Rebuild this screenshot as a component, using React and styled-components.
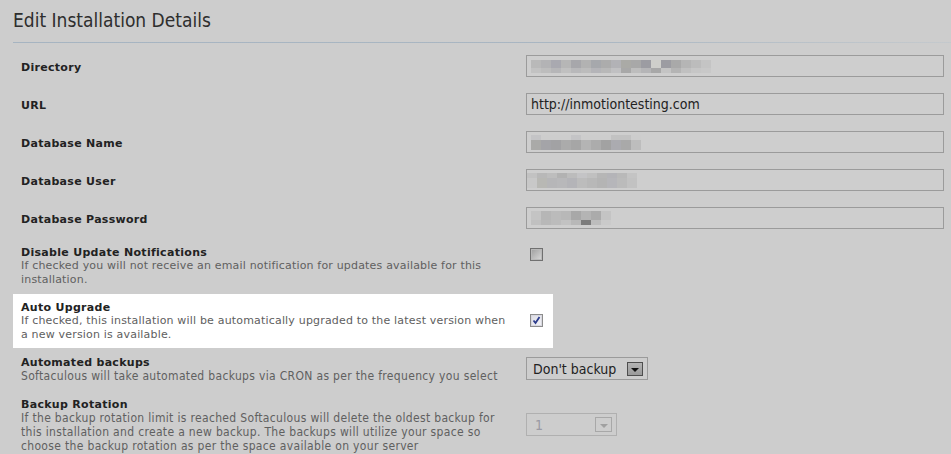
import React from "react";
import styled, { createGlobalStyle } from "styled-components";

const Global = createGlobalStyle`
  html, body { margin: 0; padding: 0; background: #cdcdcd; }
  body { font-family: "DejaVu Sans", Verdana, sans-serif; overflow: hidden; }
`;

const Page = styled.div`
  width: 951px;
  height: 454px;
  background: #cdcdcd;
  padding-left: 13px;
  box-sizing: border-box;
`;

const Title = styled.h1`
  margin: 9px 0 0;
  height: 22px;
  line-height: 22px;
  font-family: "DejaVu Sans Condensed", "DejaVu Sans", sans-serif;
  font-weight: normal;
  font-size: 19px;
  color: #2e2e2e;
`;

const Rule = styled.div`
  margin-top: 11px;
  height: 1px;
  background: linear-gradient(to right, #a6b4c1 0%, #a9b6c2 60%, #c4c9cd 100%);
`;

const Form = styled.div`
  margin-top: 4px;
  display: flex;
  flex-direction: column;
`;

const Row = styled.div`
  display: grid;
  grid-template-columns: 505px 418px;
  align-items: ${(p) => p.$align || "center"};
  box-sizing: border-box;
  width: ${(p) => (p.$highlight ? "540px" : "auto")};
  background: ${(p) => (p.$highlight ? "#ffffff" : "transparent")};
  padding: ${(p) => p.$pad || "0"} 0 ${(p) => p.$padBottom || "0"} 8px;
  margin-top: ${(p) => p.$mt || "0"};
  height: ${(p) => p.$h || "auto"};
`;

const Label = styled.div`
  font-weight: bold;
  font-size: 11px;
  line-height: 14px;
  letter-spacing: 0.3px;
  color: #222;
  padding-top: 2px;
  margin-bottom: -1px;
`;

const TextCol = styled.div`
  display: flex;
  flex-direction: column;
`;

const Desc = styled.div`
  font-family: ${(p) =>
    p.$narrow ? `"DejaVu Sans Condensed", "DejaVu Sans", sans-serif` : `"DejaVu Sans", sans-serif`};
  font-size: ${(p) => (p.$narrow ? "12px" : "11px")};
  letter-spacing: ${(p) => (p.$narrow ? "0.33px" : "0.18px")};
  line-height: 14px;
  color: #606060;
  white-space: nowrap;
`;

const Input = styled.div`
  height: 22px;
  box-sizing: border-box;
  border: 1px solid #9b9b9b;
  background: #cecece;
  padding: 0 4px;
  display: flex;
  align-items: center;
  font-family: "DejaVu Sans Condensed", "DejaVu Sans", sans-serif;
  font-size: 14px;
  color: #222;
`;

const Mosaic = styled.div`
  display: grid;
  grid-template-columns: repeat(${(p) => p.$cols}, 10px);
  grid-auto-rows: ${(p) => p.$rows};
  margin-left: ${(p) => p.$ml || "0"};
`;

const Cell = styled.span`
  display: block;
  background: ${(p) => p.$c};
`;

const Box = styled.span`
  display: block;
  width: 13px;
  height: 13px;
  box-sizing: border-box;
  margin-left: 4px;
  margin-top: ${(p) => p.$mt || "0"};
  border: 1px solid ${(p) => (p.$checked ? "#8c8c8c" : "#707070")};
  background: ${(p) =>
    p.$checked
      ? "linear-gradient(135deg, #dcdce4 0%, #f4f4f8 100%)"
      : "linear-gradient(135deg, #9e9e9e 0%, #dadada 100%)"};
  box-shadow: inset 0 0 0 1px ${(p) => (p.$checked ? "#d8d8e0" : "#b9b9b9")};
  position: relative;
`;

const Check = styled.svg`
  position: absolute;
  left: 1px;
  top: 1px;
`;

const Select = styled.div`
  width: ${(p) => p.$w};
  height: 23px;
  box-sizing: border-box;
  border: 1px solid ${(p) => (p.$disabled ? "#b0b0b0" : "#9b9b9b")};
  display: flex;
  align-items: center;
  justify-content: space-between;
  padding: 0 4px 0 ${(p) => (p.$disabled ? "8px" : "6px")};
  font-family: "DejaVu Sans Condensed", "DejaVu Sans", sans-serif;
  font-size: 14px;
  color: ${(p) => (p.$disabled ? "#9a9aa4" : "#222")};
`;

const Arrow = styled.span`
  width: ${(p) => (p.$disabled ? "17px" : "16px")};
  height: ${(p) => (p.$disabled ? "15px" : "14px")};
  box-sizing: border-box;
  border: 1px solid ${(p) => (p.$disabled ? "#a8a8a8" : "#4e4e4e")};
  background: ${(p) =>
    p.$disabled ? "#cdcdcd" : "linear-gradient(#b4b4b4, #9a9a9a)"};
  display: flex;
  align-items: center;
  justify-content: center;
  &::after {
    content: "";
    display: block;
    margin-top: 2px;
    border-left: 4px solid transparent;
    border-right: 4px solid transparent;
    border-top: 4px solid ${(p) => (p.$disabled ? "#a0a0a0" : "#111")};
  }
`;

const Control = styled.div`
  display: flex;
`;

const mosaics = {
  dir: {
    cols: 18,
    rows: "8px 5px",
    ml: "0",
    cells: [
      "#b9b9b9","#b3b3b5","#a9a9b0","#b6b6b6","#a7a7ab","#b2b2b2","#a6a8ac","#acacac","#b2b2b6","#aaaaa6","#a8a8a8","#9c9ca2","#cfcfcb","#9c9ca2","#a9a9a9","#b5b5b5","#bcbcbc","#c4c4c4",
      "#c2c2c2","#bdbdbd","#b6b6b8","#c0c0c0","#b8b8ba","#bcbcbc","#b4b4b8","#b8b8b8","#c0c0c2","#a8a8a8","#bdbdbd","#b5b5b7","#a8a8a8","#c4c4c4","#b4b4b4","#c0c0c0","#c6c6c6","#c8c8c8",
    ],
  },
  name: {
    cols: 11,
    rows: "5px 10px",
    ml: "0",
    cells: [
      "#c4c4c6","#cdcdcd","#cdcdcd","#cdcdcd","#c4c4c6","#cdcdcd","#cdcdcd","#cdcdcd","#c2c2c2","#c2c2c2","#cdcdcd",
      "#aaaaa8","#a4a4a8","#a2a2a4","#ababab","#a6a6a6","#b4b4b4","#acacac","#a2a2a2","#ababb0","#a9a9a9","#bdbdbd",
    ],
  },
  user: {
    cols: 11,
    rows: "5px 10px",
    ml: "-4px",
    cells: [
      "#c2c2c2","#b8b8b8","#bdbdbd","#b2b2b2","#bcbcbc","#c4c4c6","#c0c0c0","#b6b6b6","#b4b4b8","#b9b9b9","#c4c4c4",
      "#c8c8c8","#b8b8b4","#b6b6b8","#b8b8ba","#b4b4b8","#bcbcbc","#b8b8b8","#b4b4b4","#b6b6ba","#bbbbbb","#c2c2c2",
    ],
  },
  pass: {
    cols: 8,
    rows: "9px 5px",
    ml: "0",
    cells: [
      "#c4c4c4","#b6b6b6","#bbbbbb","#b8b8b8","#a8a8a8","#b4b4b4","#ababab","#c4c4c4",
      "#c0c0c0","#b8b8b8","#bcbcbc","#c2c2c2","#b8b8b8","#7c7c7c","#bdbdbd","#cacaca",
    ],
  },
};

function Blur({ name }) {
  const m = mosaics[name];
  return (
    <Mosaic $cols={m.cols} $rows={m.rows} $ml={m.ml}>
      {m.cells.map((c, i) => (
        <Cell key={i} $c={c} />
      ))}
    </Mosaic>
  );
}

function Checkbox({ checked, mt }) {
  return (
    <Box $checked={checked} $mt={mt}>
      {checked && (
        <Check width="9" height="9" viewBox="0 0 9 9">
          <path d="M1.5 4.5 L3.5 7 L7.5 1" fill="none" stroke="#2c3c8c" strokeWidth="1.8" />
        </Check>
      )}
    </Box>
  );
}

export default function App() {
  return (
    <>
      <Global />
      <Page>
        <Title>Edit Installation Details</Title>
        <Rule />
        <Form>
          <Row $h="38px">
            <Label>Directory</Label>
            <Input>
              <Blur name="dir" />
            </Input>
          </Row>
          <Row $h="38px">
            <Label>URL</Label>
            <Input>http://inmotiontesting.com</Input>
          </Row>
          <Row $h="38px">
            <Label>Database Name</Label>
            <Input>
              <Blur name="name" />
            </Input>
          </Row>
          <Row $h="38px">
            <Label>Database User</Label>
            <Input>
              <Blur name="user" />
            </Input>
          </Row>
          <Row $h="38px">
            <Label>Database Password</Label>
            <Input>
              <Blur name="pass" />
            </Input>
          </Row>

          <Row $mt="7px" $align="start">
            <TextCol>
              <Label>Disable Update Notifications</Label>
              <Desc>
                If checked you will not receive an email notification for updates available for this
                <br />
                installation.
              </Desc>
            </TextCol>
            <Control>
              <Checkbox mt="4px" />
            </Control>
          </Row>

          <Row $mt="7px" $highlight $pad="5px" $padBottom="6px">
            <TextCol>
              <Label>Auto Upgrade</Label>
              <Desc>
                If checked, this installation will be automatically upgraded to the latest version when
                <br />
                a new version is available.
              </Desc>
            </TextCol>
            <Control>
              <Checkbox checked />
            </Control>
          </Row>

          <Row $mt="6px">
            <TextCol>
              <Label>Automated backups</Label>
              <Desc $narrow>
                Softaculous will take automated backups via CRON as per the frequency you select
              </Desc>
            </TextCol>
            <Control>
              <Select $w="122px">
                Don't backup
                <Arrow />
              </Select>
            </Control>
          </Row>

          <Row $mt="13px">
            <TextCol>
              <Label>Backup Rotation</Label>
              <Desc $narrow>
                If the backup rotation limit is reached Softaculous will delete the oldest backup for
                <br />
                this installation and create a new backup. The backups will utilize your space so
                <br />
                choose the backup rotation as per the space available on your server
              </Desc>
            </TextCol>
            <Control>
              <Select $w="91px" $disabled>
                1
                <Arrow $disabled />
              </Select>
            </Control>
          </Row>
        </Form>
      </Page>
    </>
  );
}
